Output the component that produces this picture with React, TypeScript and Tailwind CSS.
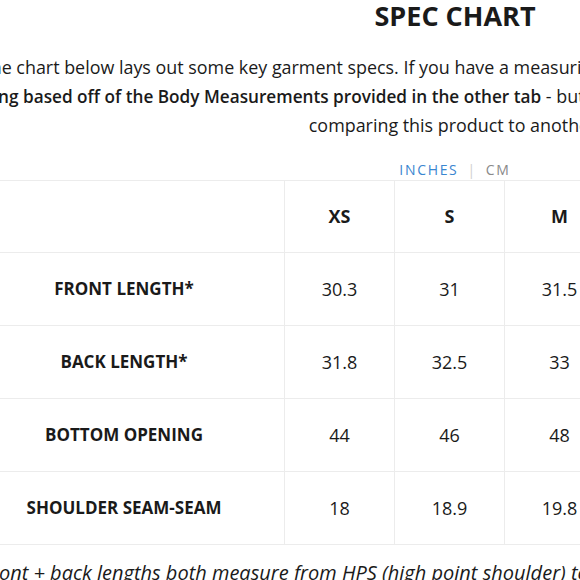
import React, { useState } from 'react'

const sizes = ['XS', 'S', 'M', 'L', 'XL', 'XXL']

const specs: { label: string; values: string[] }[] = [
    { label: 'FRONT LENGTH*', values: ['30.3', '31', '31.5', '32', '32.5', '33'] },
    { label: 'BACK LENGTH*', values: ['31.8', '32.5', '33', '33.5', '34', '34.5'] },
    { label: 'BOTTOM OPENING', values: ['44', '46', '48', '50', '52', '54'] },
    { label: 'SHOULDER SEAM-SEAM', values: ['18', '18.9', '19.8', '20.7', '21.6', '22.5'] },
]

const SpecChart: React.FC = () => {
    const [unit, setUnit] = useState<'in' | 'cm'>('in')

    const show = (v: string) => (unit === 'in' ? v : (parseFloat(v) * 2.54).toFixed(1))

    return (
        <div className="w-[982px] ml-[-36px] text-[#1a1a1a] font-['Open_Sans',sans-serif]">
            <h2 className="text-center text-[27px] font-bold leading-[32px]">SPEC CHART</h2>

            <div className="mt-[21px] text-[17.9px] leading-[29px] whitespace-nowrap">
                <div className="flex justify-center">
                    <span>The chart below lays out some key garment specs. If you have a measuring tape handy, you can also compare it to</span>
                </div>
                <div className="flex justify-center">
                    <span>
                        <b className="font-semibold text-[17.2px]">We recommend sizing based off of the Body Measurements provided in the other tab</b> - but this chart can be really helpful when you're trying to pick a
                    </span>
                </div>
                <div className="flex justify-center">
                    <span>comparing this product to another.</span>
                </div>
            </div>

            <div className="mt-[20px] flex justify-center items-center text-[14px] tracking-[0.12em] leading-[20px]">
                <button
                    onClick={() => setUnit('in')}
                    className={unit === 'in' ? 'text-[#3a86d0]' : 'text-[#8a8a8a]'}
                >
                    INCHES
                </button>
                <span className="mx-[9px] text-[#d0d0d0]">|</span>
                <button
                    onClick={() => setUnit('cm')}
                    className={unit === 'cm' ? 'text-[#3a86d0]' : 'text-[#8a8a8a]'}
                >
                    CM
                </button>
            </div>

            <div className="grid grid-cols-[320px_repeat(6,110px)] border-t border-[#ececec]">
                <div className="h-[72px] border-b border-[#ececec]" />
                {sizes.map((s) => (
                    <div
                        key={s}
                        className="h-[72px] flex items-center justify-center border-l border-b border-[#ececec] text-[18px] font-bold"
                    >
                        {s}
                    </div>
                ))}
                {specs.map((row) => (
                    <React.Fragment key={row.label}>
                        <div className="h-[73px] flex items-center justify-center border-b border-[#ececec] text-[17px] font-bold">
                            {row.label}
                        </div>
                        {row.values.map((v, i) => (
                            <div
                                key={i}
                                className="h-[73px] flex items-center justify-center border-l border-b border-[#ececec] text-[18px]"
                            >
                                {show(v)}
                            </div>
                        ))}
                    </React.Fragment>
                ))}
            </div>

            <div className="mt-[13px] flex justify-center text-[20px] leading-[29px] italic whitespace-nowrap">
                <span>*Front + back lengths both measure from HPS (high point shoulder) to hem. Measurements are taken laid flat.</span>
            </div>
        </div>
    )
}

export default function App() {
    return (
        <div className="w-[580px] h-[580px] overflow-hidden bg-white">
            <SpecChart />
        </div>
    )
}
